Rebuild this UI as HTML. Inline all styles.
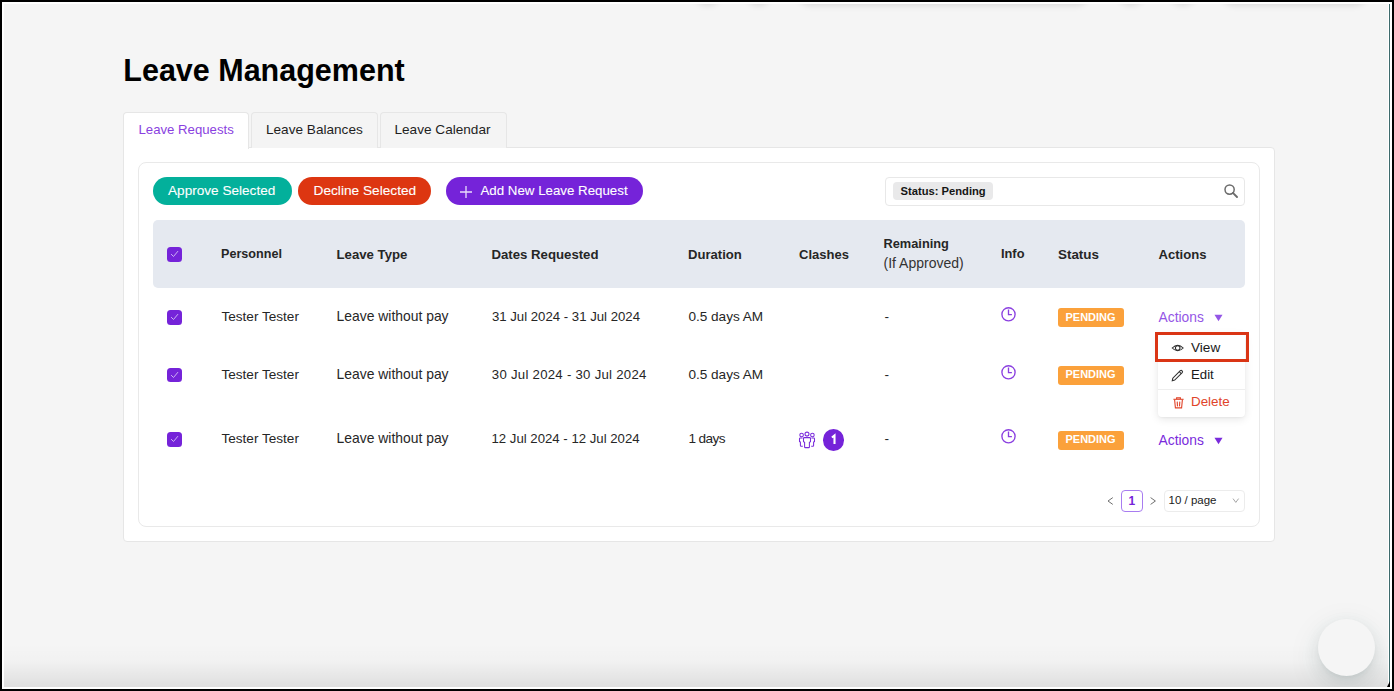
<!DOCTYPE html>
<html><head><meta charset="utf-8">
<style>
*{box-sizing:border-box;margin:0;padding:0}
html,body{width:1394px;height:691px;overflow:hidden;background:#000;font-family:"Liberation Sans",sans-serif;}
#frame{position:absolute;left:2px;top:2px;width:1390px;height:687px;background:#fff;}
#page{position:absolute;left:4px;top:4px;width:1384px;height:683px;background:#f5f5f5;overflow:hidden}
.a{position:absolute;white-space:nowrap;line-height:1}
.title{font-weight:bold;font-size:30.5px;color:#000}
#outer{position:absolute;left:123px;top:147px;width:1152px;height:395px;background:#fff;border:1px solid #e6e6e6;border-radius:0 4px 4px 4px}
.tab{position:absolute;top:112px;height:36px;border:1px solid #e6e6e6;border-bottom:none;border-radius:4px 4px 0 0;background:#f4f4f4}
.tab.act{background:#fff;height:37px;z-index:2}
#card{position:absolute;left:138px;top:162px;width:1122px;height:365px;background:#fff;border:1px solid #e9e9e9;border-radius:8px}
.bt{-webkit-text-stroke:0.1px #fff}
.btn{position:absolute;top:177px;height:28px;border-radius:14px;color:#fff;font-size:13.6px}
.th{font-weight:bold;font-size:13px;color:#262626}
.td{font-size:13.6px;color:#262626}
.cb{position:absolute;width:14.5px;height:14.5px;border-radius:3.5px;background:#7523d9}
.cb svg{position:absolute;left:0;top:0}
.pend{position:absolute;left:1058px;width:66px;height:19px;border-radius:3px;background:#fba13b;color:#fff;font-weight:bold;font-size:11px}
.act-link{color:#9456e6;font-size:13.8px}
</style></head><body>
<div id="frame"></div>
<div id="page">
  <div style="position:absolute;left:689px;top:-40px;width:29px;height:40px;border-radius:16px;box-shadow:0 2px 6px rgba(0,0,0,.10)"></div>
  <div style="position:absolute;left:741px;top:-40px;width:27px;height:40px;border-radius:16px;box-shadow:0 2px 6px rgba(0,0,0,.10)"></div>
  <div style="position:absolute;left:791px;top:-40px;width:297px;height:40px;border-radius:16px;box-shadow:0 2px 6px rgba(0,0,0,.10)"></div>
  <div style="position:absolute;left:1112px;top:-40px;width:30px;height:40px;border-radius:16px;box-shadow:0 2px 6px rgba(0,0,0,.10)"></div>
  <div style="position:absolute;left:1164px;top:-40px;width:30px;height:40px;border-radius:16px;box-shadow:0 2px 6px rgba(0,0,0,.10)"></div>
  <div style="position:absolute;left:1215px;top:-40px;width:151px;height:40px;border-radius:16px;box-shadow:0 2px 6px rgba(0,0,0,.10)"></div>
  <div style="position:absolute;left:0;top:640px;width:1384px;height:43px;background:linear-gradient(to bottom,rgba(0,0,0,0) 0%,rgba(0,0,0,0.015) 40%,rgba(0,0,0,0.09) 100%)"></div>
  <div style="position:absolute;left:1313.5px;top:615px;width:57px;height:57px;border-radius:50%;background:#f5f5f5;box-shadow:0 6px 16px 0 rgba(40,70,70,0.12),0 3px 6px -4px rgba(40,70,70,0.15),0 9px 28px 8px rgba(40,70,70,0.05)"></div>
  </div>
<div style="position:absolute;left:1389px;top:4px;width:1px;height:683px;background:#3d6a6c"></div>
<div style="position:absolute;left:1387px;top:681px;width:3px;height:6px;background:#000;clip-path:polygon(100% 0,100% 100%,0 100%)"></div>
<div id="root" style="position:absolute;left:0;top:0;width:1394px;height:691px;">
  <div class="a title" style="left:123.3px;top:55px">Leave Management</div>

  <div id="outer"></div>
  <div class="tab act" style="left:123px;width:126px"></div>
  <div class="tab" style="left:251px;width:127px"></div>
  <div class="tab" style="left:380px;width:127px"></div>
  <div class="a" style="left:138.5px;top:122.8px;font-size:13.2px;color:#8a3fe0;z-index:3">Leave Requests</div>
  <div class="a" style="left:266px;top:122.8px;font-size:13.6px;color:#1f1f1f;z-index:3">Leave Balances</div>
  <div class="a" style="left:394.5px;top:122.8px;font-size:13.6px;color:#1f1f1f;z-index:3">Leave Calendar</div>

  <div id="card"></div>

  <div class="btn" style="left:153px;width:139px;background:#03b09b"></div>
  <div class="a bt" style="left:168px;top:184.3px;font-size:13.6px;color:#fff">Approve Selected</div>
  <div class="btn" style="left:298px;width:133px;background:#dd3611"></div>
  <div class="a bt" style="left:313.5px;top:184.3px;font-size:13.7px;color:#fff">Decline Selected</div>
  <div class="btn" style="left:445.5px;width:197.5px;background:#7523d9"></div>
  <svg class="a" style="left:459px;top:184.5px" width="14" height="14" viewBox="0 0 14 14"><path d="M7 1V13M1 7H13" stroke="#e9dcfa" stroke-width="1.3"/></svg>
  <div class="a bt" style="left:480.5px;top:184.3px;font-size:13.3px;color:#fff">Add New Leave Request</div>

  <!-- search -->
  <div class="a" style="left:885px;top:177px;width:360px;height:29px;border:1px solid #e8e8e8;border-radius:4px;background:#fff"></div>
  <div class="a" style="left:893px;top:182px;width:100px;height:18px;border-radius:4px;background:#e9e9ea"></div>
  <div class="a" style="left:900.5px;top:185.6px;font-size:11.2px;font-weight:bold;color:#151515">Status: Pending</div>
  <svg class="a" style="left:1223px;top:183px" width="16" height="16" viewBox="0 0 16 16"><circle cx="6.6" cy="6.6" r="4.6" fill="none" stroke="#6b6b6b" stroke-width="1.5"/><path d="M9.9 9.9L14 14" stroke="#6b6b6b" stroke-width="1.9" stroke-linecap="round"/></svg>

  <!-- table header -->
  <div class="a" style="left:153px;top:220px;width:1092px;height:68px;border-radius:5px;background:#e5e9f0"></div>
  <div class="cb" style="left:167px;top:247px"><svg width="15" height="15" viewBox="0 0 15 15"><path d="M4.1 7.1L6.5 9.5L11 4.1" fill="none" stroke="#cdb2f3" stroke-width="1"/></svg></div>
  <div class="a th" style="left:221px;top:247.5px;font-size:12.6px">Personnel</div>
  <div class="a th" style="left:336.5px;top:247.5px;font-size:13.2px">Leave Type</div>
  <div class="a th" style="left:491.5px;top:247.5px;font-size:13.2px">Dates Requested</div>
  <div class="a th" style="left:688px;top:247.5px;font-size:13.1px">Duration</div>
  <div class="a th" style="left:799px;top:247.7px;font-size:13px">Clashes</div>
  <div class="a th" style="left:883.5px;top:238.3px;font-size:12.8px">Remaining</div>
  <div class="a td" style="left:883.5px;top:256.3px;font-size:14px;color:#333">(If Approved)</div>
  <div class="a th" style="left:1001px;top:247.7px;font-size:12.8px">Info</div>
  <div class="a th" style="left:1058px;top:247.7px;font-size:13.4px">Status</div>
  <div class="a th" style="left:1158.5px;top:247.7px;font-size:13.1px">Actions</div>

  <!-- rows -->
  
  <!-- row 1 -->
  <div class="cb" style="left:167px;top:310px"><svg width="15" height="15" viewBox="0 0 15 15"><path d="M4.1 7.1L6.5 9.5L11 4.1" fill="none" stroke="#cdb2f3" stroke-width="1"/></svg></div>
  <div class="a td" style="left:221.4px;top:309.8px;font-size:13.6px">Tester Tester</div>
  <div class="a td" style="left:336.6px;top:309.8px;font-size:13.9px">Leave without pay</div>
  <div class="a td" style="left:491.9px;top:309.8px;font-size:13.2px">31 Jul 2024 - 31 Jul 2024</div>
  <div class="a td" style="left:688.4px;top:309.8px;font-size:13.6px">0.5 days AM</div>
  <div class="a td" style="left:884.4px;top:309.8px;font-size:13.6px">-</div>
  <svg class="a" style="left:1000px;top:306px" width="17" height="17" viewBox="0 0 17 17"><circle cx="8.5" cy="8.3" r="6.6" fill="none" stroke="#8a3fe0" stroke-width="1.35"/><path d="M8.5 3.5V8.6H11.9" fill="none" stroke="#8a3fe0" stroke-width="1.35"/></svg>
  <div class="pend" style="top:308px"></div>
  <div class="a" style="left:1065.5px;top:311.7px;font-size:11px;font-weight:bold;color:#fff">PENDING</div>
  <div class="a act-link" style="left:1158.6px;top:310.6px">Actions</div>
  <svg class="a" style="left:1214px;top:314px" width="9" height="8" viewBox="0 0 9 8"><path d="M0.5 0.8H8.5L4.5 7.2Z" fill="#9456e6"/></svg>

  <!-- row 2 -->
  <div class="cb" style="left:167px;top:367.5px"><svg width="15" height="15" viewBox="0 0 15 15"><path d="M4.1 7.1L6.5 9.5L11 4.1" fill="none" stroke="#cdb2f3" stroke-width="1"/></svg></div>
  <div class="a td" style="left:221.4px;top:368.1px;font-size:13.6px">Tester Tester</div>
  <div class="a td" style="left:336.6px;top:368.1px;font-size:13.9px">Leave without pay</div>
  <div class="a td" style="left:491.8px;top:368.1px;font-size:13.2px;letter-spacing:0.27px">30 Jul 2024 - 30 Jul 2024</div>
  <div class="a td" style="left:688.4px;top:368.1px;font-size:13.6px">0.5 days AM</div>
  <div class="a td" style="left:884.4px;top:368.1px;font-size:13.6px">-</div>
  <svg class="a" style="left:1000px;top:364px" width="17" height="17" viewBox="0 0 17 17"><circle cx="8.5" cy="8.3" r="6.6" fill="none" stroke="#8a3fe0" stroke-width="1.35"/><path d="M8.5 3.5V8.6H11.9" fill="none" stroke="#8a3fe0" stroke-width="1.35"/></svg>
  <div class="pend" style="top:365.5px"></div>
  <div class="a" style="left:1065.5px;top:369.2px;font-size:11px;font-weight:bold;color:#fff">PENDING</div>

  <!-- row 3 -->
  <div class="cb" style="left:167px;top:432.3px"><svg width="15" height="15" viewBox="0 0 15 15"><path d="M4.1 7.1L6.5 9.5L11 4.1" fill="none" stroke="#cdb2f3" stroke-width="1"/></svg></div>
  <div class="a td" style="left:221.4px;top:432.3px;font-size:13.6px">Tester Tester</div>
  <div class="a td" style="left:336.6px;top:432.3px;font-size:13.9px">Leave without pay</div>
  <div class="a td" style="left:491.5px;top:432.3px;font-size:13.2px">12 Jul 2024 - 12 Jul 2024</div>
  <div class="a td" style="left:688.4px;top:432.3px;font-size:13.6px;letter-spacing:-0.6px">1 days</div>
  <svg class="a" style="left:798px;top:430.5px" width="18" height="18" viewBox="0 0 18 18" fill="none" stroke="#7a2bdc" stroke-width="1.05"><circle cx="3.6" cy="4" r="1.8"/><circle cx="9" cy="3.1" r="2"/><circle cx="14.4" cy="4" r="1.8"/><path d="M4.6 7H2.3Q1.5 7 1.5 7.8V10.6L2.4 11V14.6Q2.4 15.3 3.1 15.3H4.8"/><path d="M13.4 7H15.7Q16.5 7 16.5 7.8V10.6L15.6 11V14.6Q15.6 15.3 14.9 15.3H13.2"/><path d="M6.4 6.6H11.6Q12.5 6.6 12.5 7.5V10.6L11.4 11.2V15.9Q11.4 16.6 10.7 16.6H7.3Q6.6 16.6 6.6 15.9V11.2L5.5 10.6V7.5Q5.5 6.6 6.4 6.6Z"/></svg>
  <div class="a" style="left:822.5px;top:429px;width:21.5px;height:21.5px;border-radius:50%;background:#7523d9"></div>
  <svg class="a" style="left:822.5px;top:429px" width="22" height="22" viewBox="0 0 22 22"><path d="M8.9 8.5L11.5 6.5V14.9" fill="none" stroke="#fff" stroke-width="2.1" stroke-linejoin="miter"/></svg>
  <div class="a td" style="left:884.4px;top:432.3px;font-size:13.6px">-</div>
  <svg class="a" style="left:1000px;top:428px" width="17" height="17" viewBox="0 0 17 17"><circle cx="8.5" cy="8.3" r="6.6" fill="none" stroke="#8a3fe0" stroke-width="1.35"/><path d="M8.5 3.5V8.6H11.9" fill="none" stroke="#8a3fe0" stroke-width="1.35"/></svg>
  <div class="pend" style="top:430.7px"></div>
  <div class="a" style="left:1065.5px;top:434.4px;font-size:11px;font-weight:bold;color:#fff">PENDING</div>
  <div class="a act-link" style="left:1158.6px;top:433.5px;color:#7a2bdc">Actions</div>
  <svg class="a" style="left:1214px;top:436.5px" width="9" height="8" viewBox="0 0 9 8"><path d="M0.5 0.8H8.5L4.5 7.2Z" fill="#7a2bdc"/></svg>

  <!-- dropdown -->
  <div class="a" style="left:1158px;top:334px;width:87px;height:82.5px;border-radius:4px;background:#fff;box-shadow:0 2px 8px rgba(0,0,0,.10),0 1px 2px rgba(0,0,0,.04)"></div>
  <div class="a" style="left:1158px;top:388.5px;width:87px;height:1px;background:#eeeeee"></div>
  <svg class="a" style="left:1171px;top:343px" width="14" height="10" viewBox="0 0 14 10" fill="none" stroke="#2b2b2b" stroke-width="1.05"><path d="M1.2 5Q6.7 -0.6 12.2 5Q6.7 10.6 1.2 5Z"/><circle cx="6.7" cy="5" r="2.3"/></svg>
  <div class="a td" style="left:1191px;top:341px;font-size:13.6px;color:#1a1a1a">View</div>
  <svg class="a" style="left:1171px;top:369px" width="13" height="13" viewBox="0 0 13 13" fill="none" stroke="#333" stroke-width="1.1"><path d="M1.3 11.7L1.8 9.2L9.3 1.7Q10.2 0.9 11.1 1.8Q12 2.7 11.2 3.6L3.7 11.1Z"/><path d="M8.3 2.7L10.2 4.6"/></svg>
  <div class="a td" style="left:1191px;top:368.2px;font-size:13.2px;color:#1a1a1a">Edit</div>
  <svg class="a" style="left:1172.5px;top:396.5px" width="11" height="12" viewBox="0 0 11 12" fill="none" stroke="#e0442a" stroke-width="1.1"><path d="M0.4 2.3H10.6"/><path d="M3.6 2.1V0.9H7.4V2.1"/><path d="M1.6 2.6L2.4 10.9H8.6L9.4 2.6"/><path d="M4.2 4.6L4.5 9.4M6.8 4.6L6.5 9.4"/></svg>
  <div class="a td" style="left:1191px;top:395.2px;font-size:13.4px;color:#e0442a">Delete</div>
  <div class="a" style="left:1154.8px;top:331.8px;width:94px;height:30.2px;border:3px solid #da3515"></div>

  <!-- pagination -->
  <svg class="a" style="left:1106px;top:496px" width="9" height="10" viewBox="0 0 9 10" fill="none" stroke="#6f6f6f" stroke-width="1"><path d="M6.8 1.6L2 5L6.8 8.4"/></svg>
  <div class="a" style="left:1121px;top:490px;width:21.5px;height:21.5px;border:1px solid #a87cf0;border-radius:4px"></div>
  <div class="a" style="left:1121px;top:495px;width:21.5px;text-align:center;font-size:12px;font-weight:bold;color:#7523d9">1</div>
  <svg class="a" style="left:1149px;top:496px" width="9" height="10" viewBox="0 0 9 10" fill="none" stroke="#6f6f6f" stroke-width="1"><path d="M1.6 1.6L6.4 5L1.6 8.4"/></svg>
  <div class="a" style="left:1164px;top:490px;width:80.5px;height:21.5px;border:1px solid #ececec;border-radius:4px;background:#fff"></div>
  <div class="a td" style="left:1168.5px;top:495.2px;font-size:11.5px;color:#1a1a1a">10 / page</div>
  <svg class="a" style="left:1232px;top:497px" width="8" height="7" viewBox="0 0 8 7" fill="none" stroke="#9a9a9a" stroke-width="0.9"><path d="M1 1.6L3.8 5.4L6.6 1.6"/></svg>

</div>
</body></html>
